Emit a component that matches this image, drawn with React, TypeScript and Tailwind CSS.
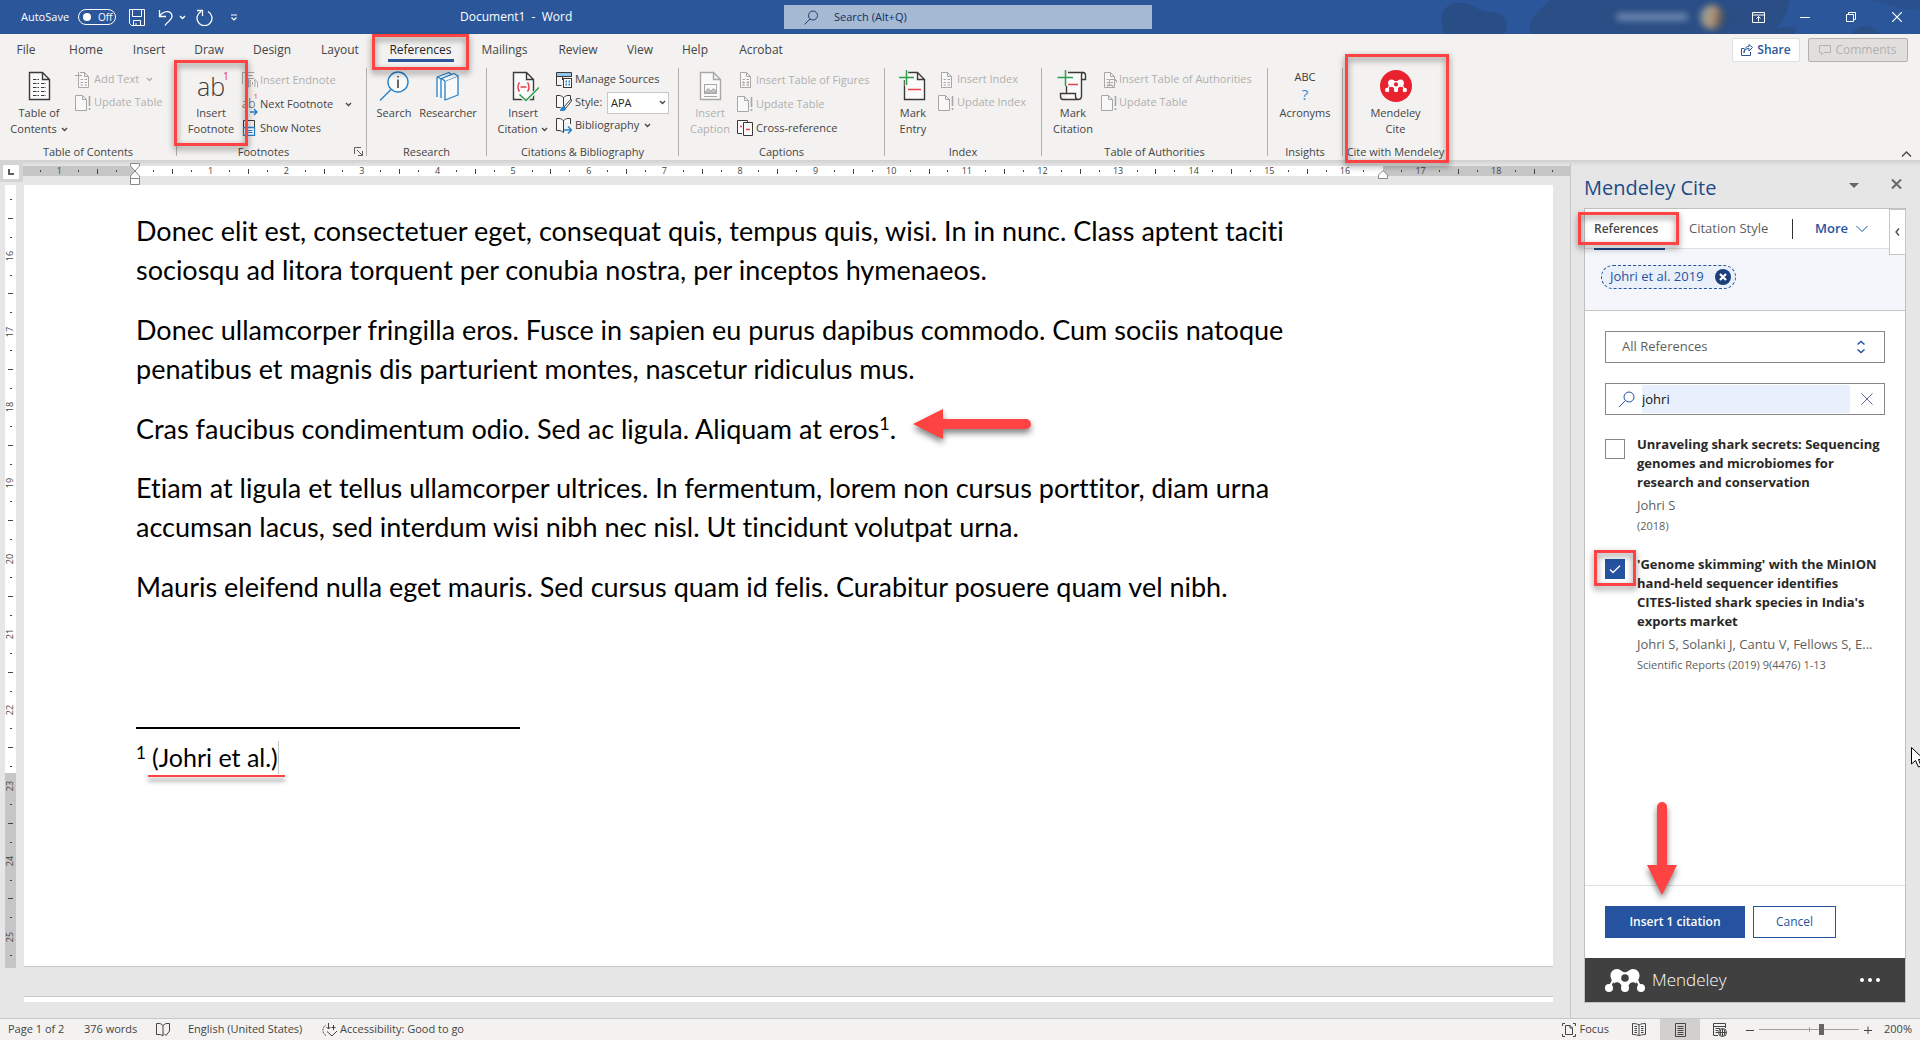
import React from "react";
import type { ReactNode } from "react";

/* ---------- shared pieces ---------- */

function Svg({ w, h, className = "", children }: { w: number; h: number; className?: string; children: ReactNode }) {
  return (
    <svg width={w} height={h} viewBox={`0 0 ${w} ${h}`} fill="none" className={`shrink-0 ${className}`} aria-hidden="true">
      {children}
    </svg>
  );
}

function Highlight({ className }: { className: string }) {
  return (
    <span
      aria-hidden="true"
      className={`pointer-events-none absolute z-20 border-3 border-[#ff4343] drop-shadow-[0_3px_3px_rgba(0,0,0,0.5)] ${className}`}
    />
  );
}

function Chevron({ className = "" }: { className?: string }) {
  return (
    <Svg w={7} h={7} className={className}>
      <path d="M1 2L3.500 4.500L6 2" stroke="currentColor" strokeWidth="1.300" />
    </Svg>
  );
}

const INK = "#3b3a39";
const PALE = "#a9a7a5";
const RED = "#e8424a";
const GREEN = "#2f9e4f";
const BLUE = "#2680c8";

/* ---------- ribbon icons, 32px ---------- */

function Sheet({ stroke = INK }: { stroke?: string }) {
  return <path d="M6.500 2.500H19.500L26.500 9.500V29.500H6.500ZM19.500 2.500V9.500H26.500" stroke={stroke} fill="#fafafa" strokeWidth="1.400" />;
}

function TocIcon() {
  return (
    <Svg w={32} h={32}>
      <Sheet />
      <path d="M10 9.500H16M10 13.500H16M18 13.500H23M10 17.500H16M18 17.500H23M10 21.500H16M18 21.500H23M10 25.500H16M18 25.500H23" stroke={INK} strokeDasharray="3.500 1" />
    </Svg>
  );
}

function FootnoteIcon() {
  return (
    <span className="relative flex h-8 items-center justify-center text-[25px] leading-8 font-light text-[#3b3a39]">
      ab
      <span className="absolute -right-1 top-0 text-[11px] leading-3 font-normal text-[#e8424a]">1</span>
    </span>
  );
}

function SearchInfoIcon() {
  return (
    <Svg w={32} h={32}>
      <circle cx="20" cy="12" r="10" stroke={BLUE} strokeWidth="1.400" fill="#fafafa" />
      <path d="M13 19.500L2 30.500" stroke={BLUE} strokeWidth="1.400" />
      <path d="M20 9.500V18M20 6V7.500" stroke={INK} strokeWidth="1.500" />
    </Svg>
  );
}

function ResearcherIcon() {
  return (
    <Svg w={32} h={32}>
      <g stroke={BLUE} strokeWidth="1.300" fill="#fafafa" strokeLinejoin="round">
        <path d="M5 27V7L17 2.500L19 4.500" />
        <path d="M9 28V9L21 4L23 6M9 9L6 7" />
        <path d="M13 11L26 6V25L13 30Z" />
        <path d="M13 11L9.500 8.500L22 3.500L26 6" />
      </g>
    </Svg>
  );
}

function InsertCitationIcon() {
  return (
    <Svg w={32} h={32}>
      <Sheet />
      <path d="M12.500 12.500C10.500 15 10.500 19 12.500 21.500M20.500 12.500C22.500 15 22.500 19 20.500 21.500M13.500 17H19.500" stroke={RED} strokeWidth="1.500" />
      <path d="M12 24.500L19 31L32 18" stroke="#f3f2f1" strokeWidth="3.500" />
      <path d="M12.500 24.500L19 30.500L32 17.500" stroke={GREEN} strokeWidth="1.500" />
    </Svg>
  );
}

function CaptionIcon() {
  return (
    <Svg w={32} h={32}>
      <Sheet stroke={PALE} />
      <rect x="10.500" y="14.500" width="12" height="9" stroke={PALE} />
      <path d="M11 22L14 18.500L17 21L19.500 18.500L22 21V23H11Z" fill="#c4c2c0" stroke={PALE} />
      <path d="M10 26.500H23" stroke={PALE} />
    </Svg>
  );
}

function MarkEntryIcon() {
  return (
    <Svg w={32} h={32}>
      <path d="M11 2.500H20.500L27.500 9.500V29.500H7.500V10M20.500 2.500V9.500H27.500" stroke={INK} fill="#fafafa" strokeWidth="1.400" />
      <path d="M1 7.500H17M9.500 0V16" stroke="#f3f2f1" strokeWidth="3.500" />
      <path d="M2 7.500H17M9.500 0V15" stroke={GREEN} strokeWidth="1.500" />
      <path d="M11 19.500H24" stroke={RED} strokeWidth="1.500" />
    </Svg>
  );
}

function MarkCitationIcon() {
  return (
    <Svg w={32} h={32}>
      <path d="M9.500 2.500H26C28 2.500 28.500 4 28.500 5.500V9.500H24.500V26C24.500 28.500 23 29.500 21 29.500H9.500V2.500Z" fill="#fafafa" />
      <path d="M9.500 16V23.500M11 2.500H26C28 2.500 28.500 4 28.500 5.500V9.500H24.500V5C24.500 3.500 25 2.500 26.500 2.500M24.500 9V26C24.500 28.500 23 29.500 21 29.500H6C4 29.500 3.500 28 3.500 26V23.500H18.500V26C18.500 28.500 19.500 29.500 21 29.500" stroke={INK} strokeWidth="1.400" />
      <path d="M.500 7.500H16M8.500 0V16" stroke={GREEN} strokeWidth="1.500" />
      <path d="M11 14.500H21" stroke={RED} strokeWidth="1.500" />
    </Svg>
  );
}

function AcronymsIcon() {
  return (
    <span className="flex h-8 flex-col items-center justify-start">
      <span className="text-[11px] leading-[14px] text-[#3b3a39]">ABC</span>
      <span className="text-[15px] leading-5 text-[#2b8fd6]">?</span>
    </span>
  );
}

function MendeleyShape({ hole }: { hole: string }) {
  return (
    <g>
      <path d="M8 11L4.500 18.500M19 15L20 18L21 15M32 11L35.500 18.500" stroke="#fff" strokeWidth="2" />
      <path d="M12 0C15.500 0 17 3.300 20 3.300C23 3.300 24.500 0 28 0C32 0 34.500 3 34.500 6.500C34.500 8.500 33.800 10.300 32.500 12L31 14.500C29 12.500 26 13 24.500 15L22 19H18L15.500 15C14 13 11 12.500 9 14.500L7.500 12C6.200 10.300 5.500 8.500 5.500 6.500C5.500 3 8 0 12 0Z" fill="#fff" />
      <path d="M9 16C11 13 14 13.500 15.500 16.500L16 19L12 22ZM31 16C29 13 26 13.500 24.500 16.500L24 19L28 22Z" fill={hole} />
      <circle cx="20" cy="9" r="3.800" fill={hole} />
      <circle cx="4" cy="19" r="4" fill="#fff" />
      <circle cx="20" cy="19" r="4" fill="#fff" />
      <circle cx="36" cy="19" r="4" fill="#fff" />
    </g>
  );
}

function MendeleyRoundIcon() {
  return (
    <Svg w={32} h={32}>
      <circle cx="16" cy="16" r="16" fill="#e9222f" />
      <g transform="translate(5 9.500) scale(0.550)">
        <MendeleyShape hole="#e9222f" />
      </g>
    </Svg>
  );
}

/* ---------- ribbon icons, 16px ---------- */

function SmallSheet({ kind }: { kind: "add" | "list" | "grid" | "update" | "authority" }) {
  return (
    <Svg w={16} h={16}>
      {kind === "update" ? (
        <>
          <path d="M.500.500H7.500L11.500 4.500V15.500H.500ZM7.500.500V4.500H11.500" stroke={PALE} fill="#f8f8f8" />
          <path d="M14.500 1V11M14.500 13V15" stroke={PALE} strokeWidth="1.600" />
        </>
      ) : (
        <>
          <path d="M3.500.500H9.500L13.500 4.500V15.500H3.500ZM9.500.500V4.500H13.500" stroke={PALE} fill="#f8f8f8" />
          {kind === "add" && <path d="M0 3.500H7M3.500 0V7" stroke="#f3f2f1" strokeWidth="3" />}
          {kind === "add" && <path d="M0 3.500H7M3.500 0V7" stroke={PALE} />}
          <path d="M5.500 7.500H8M9.500 7.500H12M5.500 10.500H8M9.500 10.500H12M5.500 13H8M9.500 13H12" stroke={PALE} />
          {kind === "grid" && <path d="M6 9V14M11 9V14" stroke={PALE} strokeDasharray="1 1" />}
          {kind === "authority" && (
            <path d="M8.500 15.500H13.500V8.500H15.500M8.500 7.500H14C15 7.500 15.500 8 15.500 9V10.500M8.500 7.500V13.500M6.500 13.500H11.500V15.500H8C7 15.500 6.500 15 6.500 13.500Z" stroke={PALE} fill="#f3f2f1" />
          )}
        </>
      )}
    </Svg>
  );
}

function EndnoteIcon() {
  return (
    <Svg w={16} h={16}>
      <path d="M.500 12V.500H12.500M3.500 15V3.500H11" stroke={PALE} />
      <path d="M6.500 15.500V6.500H12L15.500 10V15.500" stroke={PALE} fill="#f8f8f8" />
      <path d="M9 8.500H8V14.500H9M12 8.500H13V14.500H12M10.500 10V13" stroke={PALE} />
    </Svg>
  );
}

function NextFootnoteIcon() {
  return (
    <span className="relative flex h-4 w-4 shrink-0 items-center text-[12px] leading-4 font-light text-[#3b3a39]">
      ab
      <span className="absolute -top-1 right-0 text-[8px] leading-2 font-normal text-[#e8424a]">1</span>
      <svg width="9" height="8" viewBox="0 0 9 8" fill="none" className="absolute -bottom-1 right-0" aria-hidden="true">
        <path d="M1 4H8M5 1L8 4L5 7" stroke={BLUE} strokeWidth="1.500" />
      </svg>
    </span>
  );
}

function ShowNotesIcon() {
  return (
    <Svg w={16} h={16}>
      <path d="M1.500 7V.500H12.500V7" stroke={INK} />
      <path d="M1.500 7.500H12.500V15.500H1.500Z" stroke={BLUE} fill="#fff" strokeWidth="1.300" />
      <path d="M4 10.500H10.500M4 12.500H10.500" stroke={BLUE} />
    </Svg>
  );
}

function ManageSourcesIcon() {
  return (
    <Svg w={16} h={16}>
      <path d="M.500 4V.500H15.500V4Z" fill="#8fc6ee" />
      <path d="M.500 13.500V.500H15.500V5M1 4.500H15.500M.500 13.500H5.500M6.500 4V8" stroke={INK} />
      <rect x="7.500" y="6.500" width="8" height="9" fill="#fff" stroke={INK} />
      <path d="M9.500 9.500H11M12.500 9.500H14M9.500 12.500H11M12.500 12.500H14" stroke={BLUE} strokeWidth="2" />
    </Svg>
  );
}

function BookIcon({ kind }: { kind: "style" | "bibliography" }) {
  return (
    <Svg w={16} h={16}>
      <path d="M7.500 2.500C6 1.500 5 .500 3 .500H.500V12.500H3C5 12.500 6 13.500 7.500 14.500ZM7.500 2.500C9 1.500 10 .500 12 .500H14.500V6M7.500 2.500V12" stroke={INK} fill="#fafafa" />
      {kind === "style" ? (
        <>
          <path d="M15 4L8 12L9.500 13.500L15.500 6Z" fill="#fff" stroke={INK} />
          <path d="M8 11.500C5.500 11.500 6 14.500 4 15.500C7 16.500 10 15.500 9.500 13Z" fill={BLUE} stroke={BLUE} />
        </>
      ) : (
        <path d="M8 12H15.500M12 8.500L15.500 12L12 15.500" stroke={BLUE} strokeWidth="1.500" />
      )}
    </Svg>
  );
}

function CrossRefIcon() {
  return (
    <Svg w={16} h={16}>
      <path d="M10.500 2V.500H.500V13.500H5" stroke={INK} fill="#fafafa" />
      <path d="M6.500 2.500H15.500V15.500H6.500Z" stroke={INK} fill="#fafafa" />
      <path d="M3 6.500H5M9 9.500H13" stroke={RED} strokeWidth="1.500" />
    </Svg>
  );
}

/* ---------- title bar ---------- */

function TitleBar() {
  return (
    <header className="relative flex h-[34px] shrink-0 items-center overflow-hidden bg-[#2b579a] text-[12px] text-white">
      <svg width="480" height="34" viewBox="0 0 480 34" className="absolute right-0 top-0" aria-hidden="true">
        <g fill="#2a4b7f" opacity=".75">
          <path d="M2 24C-4 6 20 -4 36 8C44 12 50 12 56 13C66 14 70 24 64 34H6C2 32 2 28 2 24Z" />
          <path d="M90 34C88 18 100 10 110 0H350C346 18 342 28 320 34Z" />
          <path d="M313 34C320 28 350 26 357 28L354 34Z" />
          <path d="M382 0H480V8C460 14 450 2 430 0Z" opacity=".6" />
          <path d="M412 34C420 22 432 24 440 34Z" />
        </g>
      </svg>
      <div className="relative flex flex-1 items-center pl-[21px]">
        <label htmlFor="autosave" className="w-[57px] text-[11px]">AutoSave</label>
        <button id="autosave" role="switch" aria-checked="false" className="flex h-4 w-[38px] items-center gap-[7px] rounded-full border border-white pl-1 text-[10px] leading-3">
          <span className="h-2 w-2 rounded-full bg-white" />
          Off
        </button>
        <button aria-label="Save" className="ml-[13px]">
          <Svg w={16} h={17}>
            <path d="M.500.500H15.500V16.500H2.500L.500 14.500ZM3.500.500V7.500H12.500V.500M4.500 16.500V11.500H11.500V16.500M7 14V16.500" stroke="#fff" />
          </Svg>
        </button>
        <button aria-label="Undo" className="ml-[13px] flex items-center gap-[5px]">
          <Svg w={16} h={17}>
            <path d="M1.500 1V7.500H8M1.500 7.500C5 1 14 1 14 7C14 11 9 13 7 16.500" stroke="#fff" strokeWidth="1.300" />
          </Svg>
          <Chevron />
        </button>
        <button aria-label="Redo" className="ml-[10px]">
          <Svg w={17} h={17}>
            <path d="M12 2.500A7.500 7.500 0 1 1 5 2.500M1 1.500H6.500V7" stroke="#fff" strokeWidth="1.300" />
          </Svg>
        </button>
        <button aria-label="Customize Quick Access Toolbar" className="ml-[17px]">
          <Svg w={8} h={7}>
            <path d="M1 1H7M1.500 3.500L4 6L6.500 3.500" stroke="#fff" strokeWidth="1.200" />
          </Svg>
        </button>
        <h1 className="ml-[222px] text-[12px] whitespace-pre">Document1  -  Word</h1>
      </div>
      <label className="relative flex h-6 w-[368px] shrink-0 items-center bg-[#a6b9d2] pl-5 text-[#1c3d70]">
        <Svg w={14} h={15}>
          <circle cx="9" cy="5.500" r="4.500" stroke="#1c3d70" />
          <path d="M6 9L.500 14.500" stroke="#1c3d70" />
        </Svg>
        <input aria-label="Search" placeholder="Search (Alt+Q)" className="ml-4 w-64 bg-transparent text-[11px] outline-none placeholder:text-[#0f2f63]" />
      </label>
      <div className="relative flex w-2/5 items-center justify-end pr-[18px]">
        <span className="flex items-center gap-3 blur-[3px]" aria-hidden="true">
          <span className="h-2 w-[72px] rounded-full bg-[#a9bad6]/50" />
          <span className="h-6 w-6 rounded-full bg-[linear-gradient(100deg,#7f94a8,#b59a78_50%,#3a3a44)]" />
        </span>
        <button aria-label="Ribbon display options" className="ml-[28px]">
          <Svg w={13} h={11}>
            <path d="M.500.500H12.500V10.500H.500ZM.500 3H12.500M6.500 9.500V4.500M4.500 6.500L6.500 4.500L8.500 6.500" stroke="#fff" />
          </Svg>
        </button>
        <button aria-label="Minimize" className="ml-[35px]">
          <Svg w={10} h={10}><path d="M0 5.500H10" stroke="#fff" /></Svg>
        </button>
        <button aria-label="Restore" className="ml-[36px]">
          <Svg w={10} h={10}><path d="M.500 2.500H7.500V9.500H.500ZM2.500 2.500V.500H9.500V7.500H7.500" stroke="#fff" /></Svg>
        </button>
        <button aria-label="Close" className="ml-[36px]">
          <Svg w={10} h={10}><path d="M0 0L10 10M10 0L0 10" stroke="#fff" strokeWidth="1.200" /></Svg>
        </button>
      </div>
    </header>
  );
}

/* ---------- ribbon ---------- */

const tabs = [
  { name: "File", cls: "w-[52px]" },
  { name: "Home", cls: "w-[68px]" },
  { name: "Insert", cls: "w-[58px]" },
  { name: "Draw", cls: "w-[62px]" },
  { name: "Design", cls: "w-[64px]" },
  { name: "Layout", cls: "w-[72px]" },
  { name: "References", cls: "w-[89px]" },
  { name: "Mailings", cls: "w-[79px]" },
  { name: "Review", cls: "w-[68px]" },
  { name: "View", cls: "w-[56px]" },
  { name: "Help", cls: "w-[54px]" },
  { name: "Acrobat", cls: "w-[78px]" },
];

function TabRow() {
  return (
    <div className="flex h-8 shrink-0 items-center bg-[#f3f2f1] pr-3">
      <nav role="tablist" aria-label="Ribbon tabs" className="flex flex-1 text-[12px] text-[#444]">
        {tabs.map((t) => (
          <button key={t.name} role="tab" aria-selected={t.name === "References"} className={`relative h-8 text-center ${t.cls} ${t.name === "References" ? "text-[#252423]" : ""}`}>
            {t.name}
            {t.name === "References" && (
              <>
                <span className="absolute bottom-1 left-1/2 h-[3px] w-[66px] -translate-x-1/2 bg-[#2b579a]" />
                <Highlight className="-inset-x-[4px] -bottom-1 top-0" />
              </>
            )}
          </button>
        ))}
      </nav>
      <button className="flex h-6 w-[68px] items-center justify-center gap-1 rounded-xs border border-[#e1dfdd] bg-white text-[12px] font-semibold text-[#2b579a]">
        <Svg w={12} h={12}>
          <path d="M3 4.500H.500V11.500H9.500V8M3 9C3 6 5 4.500 8 4.500V7L11.500 3.500L8 .500V2.500C4.500 2.500 3 5 3 9Z" stroke="#2b579a" />
        </Svg>
        Share
      </button>
      <button disabled className="ml-2 flex h-6 w-[100px] items-center justify-center gap-1 rounded-xs border border-[#b3b0ad] bg-[#e1dfdd] text-[12px] text-[#b3b0ad]">
        <Svg w={12} h={11}>
          <path d="M.500.500H11.500V7.500H5L2.500 10V7.500H.500Z" stroke="#b3b0ad" />
        </Svg>
        Comments
      </button>
    </div>
  );
}

function Group({ label, className, labelClass = "", children }: { label: string; className: string; labelClass?: string; children: ReactNode }) {
  return (
    <section aria-label={label} className={`relative flex shrink-0 flex-col ${className}`}>
      <div className="flex h-[78px] items-start pt-[2px]">{children}</div>
      <h2 className={`text-center text-[11px] leading-4 whitespace-nowrap text-[#444] ${labelClass}`}>{label}</h2>
    </section>
  );
}

function Divider() {
  return <div className="mt-[2px] h-[88px] w-px shrink-0 bg-[#b3b0ad]" />;
}

function Big({ icon, lines, className, disabled = false, menu = false, children }: { icon: ReactNode; lines: string[]; className: string; disabled?: boolean; menu?: boolean; children?: ReactNode }) {
  return (
    <button disabled={disabled} className={`relative flex shrink-0 flex-col items-center pt-[2px] text-[11px] leading-4 whitespace-nowrap ${disabled ? "text-[#b1afad]" : "text-[#444]"} ${className}`}>
      {icon}
      {lines.map((l, i) => (
        <span key={l} className={`flex items-center gap-1 ${i === 0 ? "mt-[3px]" : ""}`}>
          {l}
          {menu && i === lines.length - 1 && <Chevron />}
        </span>
      ))}
      {children}
    </button>
  );
}

function Small({ icon, label, disabled = false, menu = "", className }: { icon: ReactNode; label: string; disabled?: boolean; menu?: string; className: string }) {
  return (
    <button disabled={disabled} className={`flex items-center text-[11px] whitespace-nowrap ${disabled ? "text-[#b1afad]" : "text-[#444]"} ${className}`}>
      {icon}
      {label}
      {menu && <Chevron className={menu} />}
    </button>
  );
}

function Ribbon() {
  return (
    <div className="flex h-[94px] shrink-0 items-start bg-[#f3f2f1]">
      <Group label="Table of Contents" className="w-44">
        <Big icon={<TocIcon />} lines={["Table of", "Contents"]} menu className="ml-1 w-[70px]" />
        <div className="ml-px flex flex-col">
          <Small className="h-[23px] gap-[3px]" disabled menu="ml-1" icon={<SmallSheet kind="add" />} label="Add Text" />
          <Small className="h-[23px] gap-[3px]" disabled icon={<SmallSheet kind="update" />} label="Update Table" />
        </div>
      </Group>
      <Divider />
      <Group label="Footnotes" className="w-[189px]" labelClass="pr-4">
        <Big icon={<FootnoteIcon />} lines={["Insert", "Footnote"]} className="ml-[3px] w-[62px]">
          <Highlight className="-inset-x-[6px] -bottom-[9px] -top-2" />
        </Big>
        <div className="flex flex-col">
          <Small className="h-6 gap-[2px]" disabled icon={<EndnoteIcon />} label="Insert Endnote" />
          <Small className="h-6 gap-[2px]" icon={<NextFootnoteIcon />} label="Next Footnote" menu="ml-[10px]" />
          <Small className="h-6 gap-[2px]" icon={<ShowNotesIcon />} label="Show Notes" />
        </div>
        <button aria-label="Footnote settings" className="absolute bottom-[4px] right-[3px]">
          <Svg w={9} h={9}>
            <path d="M.500 7V.500H7M3 3L8 8M8.500 4V8.500H4" stroke="#605e5c" />
          </Svg>
        </button>
      </Group>
      <Divider />
      <Group label="Research" className="w-[119px]">
        <Big icon={<SearchInfoIcon />} lines={["Search"]} className="ml-1 w-[46px]" />
        <Big icon={<ResearcherIcon />} lines={["Researcher"]} className="w-[62px]" />
      </Group>
      <Divider />
      <Group label="Citations & Bibliography" className="w-[191px]">
        <Big icon={<InsertCitationIcon />} lines={["Insert", "Citation"]} menu className="ml-[5px] w-[62px]" />
        <div className="ml-[2px] flex flex-col">
          <Small className="h-[23px] gap-[3px]" icon={<ManageSourcesIcon />} label="Manage Sources" />
          <div className="flex h-[23px] items-center gap-[3px] text-[11px] text-[#444]">
            <BookIcon kind="style" />
            <label htmlFor="style" className="w-[29px] whitespace-nowrap">Style:</label>
            <span className="relative flex items-center">
              <select id="style" className="h-[22px] w-[62px] appearance-none border border-[#c8c6c4] bg-white pl-[3px] text-[11px] leading-5 text-[#252423]">
                <option>APA</option>
              </select>
              <Chevron className="pointer-events-none absolute right-[3px]" />
            </span>
          </div>
          <Small className="h-[23px] gap-[3px]" icon={<BookIcon kind="bibliography" />} label="Bibliography" menu="ml-[2px]" />
        </div>
      </Group>
      <Divider />
      <Group label="Captions" className="w-[205px]">
        <Big disabled icon={<CaptionIcon />} lines={["Insert", "Caption"]} className="ml-1 w-[54px]" />
        <div className="flex flex-col">
          <Small className="h-6 gap-[3px]" disabled icon={<SmallSheet kind="grid" />} label="Insert Table of Figures" />
          <Small className="h-6 gap-[3px]" disabled icon={<SmallSheet kind="update" />} label="Update Table" />
          <Small className="h-6 gap-[3px]" icon={<CrossRefIcon />} label="Cross-reference" />
        </div>
      </Group>
      <Divider />
      <Group label="Index" className="w-[156px]">
        <Big icon={<MarkEntryIcon />} lines={["Mark", "Entry"]} className="ml-[3px] w-[50px]" />
        <div className="flex flex-col">
          <Small className="h-[23px] gap-[3px]" disabled icon={<SmallSheet kind="list" />} label="Insert Index" />
          <Small className="h-[23px] gap-[3px]" disabled icon={<SmallSheet kind="update" />} label="Update Index" />
        </div>
      </Group>
      <Divider />
      <Group label="Table of Authorities" className="w-[225px]">
        <Big icon={<MarkCitationIcon />} lines={["Mark", "Citation"]} className="ml-[3px] w-[56px]" />
        <div className="flex flex-col">
          <Small className="h-[23px] gap-[2px]" disabled icon={<SmallSheet kind="authority" />} label="Insert Table of Authorities" />
          <Small className="h-[23px] gap-[2px]" disabled icon={<SmallSheet kind="update" />} label="Update Table" />
        </div>
      </Group>
      <Divider />
      <Group label="Insights" className="w-[74px]">
        <Big icon={<AcronymsIcon />} lines={["Acronyms"]} className="w-full" />
      </Group>
      <Divider />
      <Group label="Cite with Mendeley" className="w-[105px]">
        <Big icon={<MendeleyRoundIcon />} lines={["Mendeley", "Cite"]} className="w-full" />
        <Highlight className="-bottom-[3px] -top-3 -right-px left-[2px]" />
      </Group>
      <button aria-label="Collapse the ribbon" className="mb-[2px] ml-auto mr-2 self-end">
        <Svg w={11} h={8}>
          <path d="M1 6.500L5.500 2L10 6.500" stroke="#444" strokeWidth="1.300" />
        </Svg>
      </button>
    </div>
  );
}

/* ---------- rulers ---------- */

function HorizontalRuler() {
  const quarters = Array.from({ length: 81 }, (_, i) => i - 5);
  return (
    <div className="relative mt-[6px] flex h-[10px] min-w-0 flex-1 items-center bg-[linear-gradient(to_right,#c6c6c6_112px,#fff_112px,#fff_1360px,#c6c6c6_1360px)] px-2 text-[9px] leading-[10px] text-[#444]">
      {quarters.map((q) => (
        <span key={q} className="flex min-w-0 flex-1 items-center justify-center overflow-visible">
          {q === 0 || q === 66 ? null : q % 4 === 0 ? (
            <span>{Math.abs(q / 4)}</span>
          ) : q % 2 === 0 ? (
            <span className="h-[5px] w-px bg-[#444]" />
          ) : (
            <span className="h-[2px] w-px bg-[#444]" />
          )}
        </span>
      ))}
      <svg width="10" height="22" viewBox="0 0 10 22" fill="#fff" stroke="#8a8886" className="absolute -top-[3px] left-[107px]" aria-hidden="true">
        <path d="M.500.500H9.500V3L5 8L.500 3ZM.500 15.500V13L5 8L9.500 13V15.500ZM.500 15.500H9.500V21.500H.500Z" />
      </svg>
      <svg width="10" height="9" viewBox="0 0 10 9" fill="#fff" stroke="#8a8886" className="absolute left-[1355px] top-1" aria-hidden="true">
        <path d="M.500 8.500V5L5 .500L9.500 5V8.500Z" />
      </svg>
    </div>
  );
}

function VerticalRuler() {
  const quarters = Array.from({ length: 41 }, (_, i) => i - 3);
  return (
    <div className="mb-[50px] ml-[5px] flex w-[11px] shrink-0 flex-col bg-[linear-gradient(to_bottom,#fff_588px,#c6c6c6_588px)] pb-[3px] pt-[5px] text-[9px] leading-[10px] text-[#444]">
      {quarters.map((q) => (
        <span key={q} className="flex min-h-0 flex-1 items-center justify-center">
          {q % 4 === 0 ? (
            <span className="-rotate-90">{16 + q / 4}</span>
          ) : q % 2 === 0 ? (
            <span className="h-px w-[5px] bg-[#444]" />
          ) : (
            <span className="h-px w-[2px] bg-[#444]" />
          )}
        </span>
      ))}
    </div>
  );
}

/* ---------- document ---------- */

function DocumentArea() {
  return (
    <main className="flex min-w-0 flex-1 flex-col">
      <div className="flex h-[25px] shrink-0">
        <div className="h-[22px] w-[23px] shrink-0 bg-[#d4d4d4]">
          <button aria-label="Tab stop" className="ml-[3px] mt-[5px] flex h-[14px] w-4 items-center justify-center bg-white">
            <span className="h-[6px] w-[6px] border-b-2 border-l-2 border-[#605e5c]" />
          </button>
        </div>
        <HorizontalRuler />
      </div>
      <div className="flex min-h-0 flex-1">
        <VerticalRuler />
        <div className="ml-2 mr-[17px] flex min-w-0 flex-1 flex-col">
          <article className="relative min-h-0 flex-1 border-b border-[#c6c6c6] bg-white pl-28 pt-[26px] font-[Lato,Carlito,sans-serif] text-[27px] leading-[39px] text-black [font-variant-ligatures:none]">
            <p className="mb-[21px]">
              Donec elit est, consectetuer eget, consequat quis, tempus quis, wisi. In in nunc. Class aptent taciti
              <br />
              sociosqu ad litora torquent per conubia nostra, per inceptos hymenaeos.
            </p>
            <p className="mb-[21px]">
              Donec ullamcorper fringilla eros. Fusce in sapien eu purus dapibus commodo. Cum sociis natoque
              <br />
              penatibus et magnis dis parturient montes, nascetur ridiculus mus.
            </p>
            <p className="relative mb-5">
              Cras faucibus condimentum odio. Sed ac ligula. Aliquam at eros<sup className="text-[18px]">1</sup>.
              <svg width="120" height="32" viewBox="0 0 120 32" className="absolute left-[777px] top-0 overflow-visible drop-shadow-[0_4px_3px_rgba(0,0,0,0.5)]" aria-hidden="true">
                <path d="M0 15L30 0V10H113A5 5 0 0 1 113 20H30V30Z" fill="#ff4343" />
              </svg>
            </p>
            <p className="mb-[21px]">
              Etiam at ligula et tellus ullamcorper ultrices. In fermentum, lorem non cursus porttitor, diam urna
              <br />
              accumsan lacus, sed interdum wisi nibh nec nisl. Ut tincidunt volutpat urna.
            </p>
            <p>Mauris eleifend nulla eget mauris. Sed cursus quam id felis. Curabitur posuere quam vel nibh.</p>
            <hr className="mt-[121px] w-96 border-t-2 border-black" />
            <p className="mt-3 flex h-[33px] text-[25px] leading-[33px]">
              <span className="w-4"><sup className="text-[17px]">1</sup></span>
              <span className="relative border-r border-[#c8c6c4]">
                (Johri et al.)
                <span className="absolute -bottom-[3px] -left-[4px] -right-[7px] h-[2px] bg-[#ff4343] shadow-[0_4px_4px_rgba(0,0,0,0.5)]" />
              </span>
            </p>
          </article>
          <div className="mt-[29px] h-[6px] shrink-0 border-t border-[#c6c6c6] bg-white" />
          <div className="h-4 shrink-0" />
        </div>
      </div>
    </main>
  );
}

/* ---------- Mendeley task pane ---------- */

type Reference = { id: string; title: string[]; authors: string; source: string; checked: boolean };

const references: Reference[] = [
  {
    id: "ref-2018",
    title: ["Unraveling shark secrets: Sequencing", "genomes and microbiomes for", "research and conservation"],
    authors: "Johri S",
    source: "(2018)",
    checked: false,
  },
  {
    id: "ref-2019",
    title: ["'Genome skimming' with the MinION", "hand-held sequencer identifies", "CITES-listed shark species in India's", "exports market"],
    authors: "Johri S, Solanki J, Cantu V, Fellows S, E...",
    source: "Scientific Reports (2019) 9(4476) 1-13",
    checked: true,
  },
];

function ReferenceItem({ item }: { item: Reference }) {
  return (
    <li className="flex gap-3">
      <span className="relative mt-1 h-5 w-5 shrink-0">
        <input
          id={item.id}
          type="checkbox"
          defaultChecked={item.checked}
          className="block h-5 w-5 appearance-none border border-[#8a8886] bg-white checked:border-[#25539f] checked:bg-[#25539f]"
        />
        {item.checked && (
          <>
            <svg width="12" height="9" viewBox="0 0 12 9" fill="none" className="absolute left-1 top-[6px]" aria-hidden="true">
              <path d="M1 4.500L4 7.500L11 .800" stroke="#fff" strokeWidth="1.300" />
            </svg>
            <Highlight className="-inset-x-[11px] -bottom-[7px] -top-[9px]" />
          </>
        )}
      </span>
      <label htmlFor={item.id} className="min-w-0 flex-1 whitespace-nowrap">
        <span className="block text-[13px] leading-[19px] font-bold text-[#292827]">
          {item.title.map((line) => (
            <span key={line} className="block">{line}</span>
          ))}
        </span>
        <span className="mt-[3px] block text-[13px] leading-5 text-[#605e5c]">{item.authors}</span>
        <span className="mt-px block text-[11px] leading-5 text-[#605e5c]">{item.source}</span>
      </label>
    </li>
  );
}

function TaskPane() {
  return (
    <aside aria-label="Mendeley Cite" className="mt-[3px] flex w-[350px] shrink-0 flex-col border-l border-[#c6c6c6] pl-[13px] pr-[14px]">
      <div className="flex h-[45px] shrink-0 items-center pr-1">
        <h2 className="flex-1 pt-1 text-[20px] text-[#1e4a86]">Mendeley Cite</h2>
        <button aria-label="Task pane options" className="mr-[32px]">
          <Svg w={10} h={5}><path d="M0 0H10L5 5Z" fill="#666" /></Svg>
        </button>
        <button aria-label="Close pane" className="mb-1">
          <Svg w={11} h={10}><path d="M1 .500L10 9.500M10 .500L1 9.500" stroke="#666" strokeWidth="2" /></Svg>
        </button>
      </div>
      <div className="relative mb-[15px] flex min-h-0 flex-1 flex-col border border-[#c0c0c0] bg-white">
        <nav className="flex h-10 shrink-0 items-center border-b border-[#e1dfdd] pl-[9px] text-[13px]">
          <a href="#references" className="relative flex h-10 w-[71px] items-center font-semibold text-[#484644]">
            <span className="text-[12px]">References</span>
            <span className="absolute -bottom-px left-0 h-[2px] w-full bg-[#1e4a86]" />
            <Highlight className="-left-4 -right-[14px] bottom-1 top-[3px]" />
          </a>
          <a href="#style" className="ml-6 w-[103px] text-[#605e5c]">Citation Style</a>
          <span className="h-5 w-px bg-[#323130]" />
          <button className="ml-[22px] flex items-center gap-2 text-[13px] font-semibold text-[#25539f]">
            More
            <Svg w={12} h={8}><path d="M.500 1L6 6.500L11.500 1" stroke="#25539f" /></Svg>
          </button>
        </nav>
        <button aria-label="Collapse" className="absolute -right-px top-0 flex h-[46px] w-[17px] items-center justify-center border border-[#c6c6c6] bg-white">
          <Svg w={5} h={8}><path d="M4 .500L1 4L4 7.500" stroke="#444" strokeWidth="1.300" /></Svg>
        </button>
        <div className="h-[62px] shrink-0 border-b border-[#c6c6c6] bg-[#f5f6fc] pl-4 pt-4">
          <span className="flex h-6 w-[135px] items-center rounded-full border border-dashed border-[#25539f] bg-[#eaf0fa] pl-2 text-[13px] text-[#25539f]">
            <span className="flex-1">Johri et al. 2019</span>
            <button aria-label="Remove" className="mr-1">
              <Svg w={16} h={16}>
                <circle cx="8" cy="8" r="8" fill="#1b3f7c" />
                <path d="M5 5L11 11M11 5L5 11" stroke="#fff" strokeWidth="2.200" />
              </Svg>
            </button>
          </span>
        </div>
        <div className="flex flex-1 flex-col px-5 pt-5">
          <span className="relative block">
            <select aria-label="Library" className="block h-8 w-full appearance-none border border-[#8a8886] bg-white pl-4 text-[13px] text-[#605e5c]">
              <option>All References</option>
            </select>
            <Svg w={10} h={14} className="pointer-events-none absolute right-[19px] top-[9px]">
              <path d="M1.500 4.500L5 1.500L8.500 4.500M1.500 9.500L5 12.500L8.500 9.500" stroke="#25539f" strokeWidth="1.500" />
            </Svg>
          </span>
          <div className="mt-5 flex h-8 items-center border border-[#8a8886] pl-3 pr-[11px]">
            <Svg w={17} h={17}>
              <circle cx="11" cy="6" r="5" stroke="#25539f" />
              <path d="M7.500 9.500L1 16" stroke="#25539f" />
            </Svg>
            <input aria-label="Search references" defaultValue="johri" className="ml-[7px] h-7 min-w-0 flex-1 bg-[#e8f0fe] text-[13px] text-[#111] outline-none" />
            <button aria-label="Clear search" className="ml-[11px]">
              <Svg w={12} h={12}><path d="M.500.500L11.500 11.500M11.500.500L.500 11.500" stroke="#5b6a99" /></Svg>
            </button>
          </div>
          <ul className="mt-5 flex flex-col gap-[19px]">
            {references.map((r) => (
              <ReferenceItem key={r.id} item={r} />
            ))}
          </ul>
        </div>
        <div className="relative flex shrink-0 gap-2 border-t border-[#e1dfdd] px-5 py-5 text-[12px] font-semibold">
          <button className="h-8 w-[140px] bg-[#25539f] text-white">Insert 1 citation</button>
          <button className="h-8 w-[83px] border border-[#25539f] bg-white font-medium text-[#25539f]">Cancel</button>
          <svg width="30" height="94" viewBox="0 0 30 94" className="absolute -top-[84px] left-[62px] overflow-visible drop-shadow-[0_4px_3px_rgba(0,0,0,0.5)]" aria-hidden="true">
            <path d="M15 93L0 63H10V5A5 5 0 0 1 20 5V63H30Z" fill="#ff4343" />
          </svg>
        </div>
        <footer className="flex h-11 shrink-0 items-center bg-[#404040] pl-5 pr-[25px] text-white">
          <Svg w={40} h={23}><MendeleyShape hole="#404040" /></Svg>
          <span className="ml-[7px] flex-1 text-[17px] font-light">Mendeley</span>
          <button aria-label="More options" className="flex gap-1">
            <span className="h-1 w-1 rounded-full bg-white" />
            <span className="h-1 w-1 rounded-full bg-white" />
            <span className="h-1 w-1 rounded-full bg-white" />
          </button>
        </footer>
      </div>
    </aside>
  );
}

/* ---------- status bar ---------- */

function StatusBar() {
  return (
    <footer className="flex h-[22px] shrink-0 items-center border-t border-[#c6c6c6] bg-[#f3f2f1] text-[11px] whitespace-nowrap text-[#444]">
      <button className="ml-2 w-[76px] text-left">Page 1 of 2</button>
      <button className="w-[72px] text-left">376 words</button>
      <button aria-label="Proofing" className="w-8">
        <Svg w={14} h={14}>
          <path d="M7 2.500C5.500 1.500 5 .500 3 .500H.500V11.500H3C5 11.500 5.500 12 7 13V2.500C8.500 1.500 9 .500 11 .500H13.500V8M8 10.500L10 12.500L13.500 8" stroke="#444" />
        </Svg>
      </button>
      <button className="w-[134px] text-left">English (United States)</button>
      <button className="flex items-center gap-[2px]">
        <Svg w={16} h={14}>
          <path d="M4 12.500A6 6 0 0 1 4 2" stroke="#444" strokeDasharray="2 1" />
          <path d="M6.500 0V6M4.500 4L6.500 6L8.500 4M11.500 2V7M9.500 4.500H13.500M5 8.500L10 13L15 8" stroke="#444" />
        </Svg>
        Accessibility: Good to go
      </button>
      <div className="ml-auto flex h-full items-center pr-2">
        <button className="flex items-center gap-[3px]">
          <Svg w={14} h={14}>
            <path d="M3 .500H.500V3M11 .500H13.500V3M.500 11V13.500H3M13.500 11V13.500H11" stroke="#444" />
            <path d="M3.500 2.500H8L10.500 5V11.500H3.500ZM8 2.500V5H10.500" stroke="#444" />
          </Svg>
          Focus
        </button>
        <button aria-label="Read mode" className="ml-[23px]">
          <Svg w={14} h={13}>
            <path d="M7 2C5.500 1 4 .500 .500.500V11.500C4 11.500 5.500 12 7 13C8.500 12 10 11.500 13.500 11.500V.500C10 .500 8.500 1 7 2ZM7 2V13M2.500 3.500H5M2.500 5.500H5M2.500 7.500H5M2.500 9.500H5M9 3.500H11.500M9 5.500H11.500M9 7.500H11.500M9 9.500H11.500" stroke="#444" />
          </Svg>
        </button>
        <button aria-label="Print layout" aria-pressed="true" className="ml-[14px] flex h-full w-10 items-center justify-center bg-[#d2d0ce]">
          <Svg w={11} h={14}>
            <path d="M.500.500H10.500V13.500H.500ZM2.500 3.500H8.500M2.500 5.500H8.500M2.500 7.500H8.500M2.500 9.500H8.500M2.500 11.500H8.500" stroke="#444" />
          </Svg>
        </button>
        <button aria-label="Web layout" className="ml-[13px]">
          <Svg w={14} h={14}>
            <path d="M5 12.500H.500V.500H12.500V5M.500 3.500H12.500M2.500 5.500H7M2.500 7.500H5M2.500 9.500H5" stroke="#444" />
            <circle cx="9.500" cy="9.500" r="4" stroke="#444" />
            <path d="M5.500 9.500H13.500M9.500 5.500V13.500M8 6.500C7 8.500 7 10.500 8 12.500M11 6.500C12 8.500 12 10.500 11 12.500" stroke="#444" />
          </Svg>
        </button>
        <button aria-label="Zoom out" className="ml-[19px]">
          <Svg w={8} h={8}><path d="M0 4.500H8" stroke="#444" /></Svg>
        </button>
        <span className="relative ml-[5px] flex w-[100px] items-center">
          <span className="pointer-events-none absolute left-[50px] h-[5px] w-px bg-[#a19f9d]" />
          <input
            type="range"
            aria-label="Zoom level"
            min={0}
            max={100}
            defaultValue={63}
            className="h-3 w-full appearance-none bg-[linear-gradient(#a19f9d,#a19f9d)] bg-[length:100%_1px] bg-center bg-no-repeat [&::-webkit-slider-thumb]:h-[11px] [&::-webkit-slider-thumb]:w-[5px] [&::-webkit-slider-thumb]:appearance-none [&::-webkit-slider-thumb]:bg-[#666]"
          />
        </span>
        <button aria-label="Zoom in" className="ml-[5px]">
          <Svg w={8} h={8}><path d="M0 4.500H8M4 .500V8" stroke="#444" /></Svg>
        </button>
        <button className="ml-3">200%</button>
      </div>
    </footer>
  );
}

export default function App() {
  return (
    <div className="relative flex h-screen flex-col overflow-hidden bg-[#e6e6e6] font-['Open_Sans','Noto_Sans',sans-serif]">
      <TitleBar />
      <TabRow />
      <Ribbon />
      <div className="flex min-h-0 flex-1 bg-[linear-gradient(#d0d0d0,#e6e6e6_6px)]">
        <DocumentArea />
        <TaskPane />
      </div>
      <StatusBar />
      <svg width="9" height="22" viewBox="0 0 9 22" className="pointer-events-none absolute right-0 top-[747px]" aria-hidden="true">
        <path d="M.500.500V17L4.500 13.500L7.500 20L10 19L7.500 12.500H13Z" fill="#fff" stroke="#000" />
      </svg>
    </div>
  );
}
